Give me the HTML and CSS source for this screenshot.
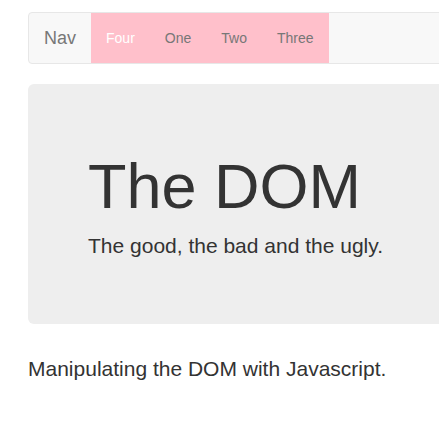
FILE: index.html
```html
<!DOCTYPE html>
<html>
<head>
<meta charset="utf-8">
<link rel="stylesheet" href="styles.css">
</head>
<body>
<div class="container">
  <nav class="navbar">
    <a class="brand">Nav</a>
    <ul class="nav-list">
      <li><a class="active">Four</a></li>
      <li><a>One</a></li>
      <li><a>Two</a></li>
      <li><a>Three</a></li>
    </ul>
  </nav>
  <div class="jumbotron">
    <h1>The DOM</h1>
    <p>The good, the bad and the ugly.</p>
  </div>
  <p class="lead">Manipulating the DOM with Javascript.</p>
</div>
</body>
</html>
```

FILE: styles.css
```css
html, body {
  margin: 0;
  padding: 0;
  overflow: hidden;
  background: #fff;
}
body {
  font-family: "Liberation Sans", Arial, Helvetica, sans-serif;
  font-size: 14px;
  line-height: 1.42857143;
  color: #333;
}
.container {
  width: 1000px;
  padding: 12px 0 0 28px;
}
.navbar {
  display: flex;
  align-items: stretch;
  min-height: 50px;
  background: #f8f8f8;
  border: 1px solid #e7e7e7;
  border-radius: 4px;
  margin-bottom: 20px;
}
.brand {
  padding: 15px;
  font-size: 18px;
  line-height: 20px;
  color: #777;
}
.nav-list {
  display: flex;
  list-style: none;
  margin: 0;
  padding: 0;
  background: pink;
}
.nav-list a {
  display: block;
  padding: 15px;
  line-height: 20px;
  color: #777;
}
.nav-list a.active {
  color: #fff;
}
.jumbotron {
  background: #eee;
  border-radius: 6px;
  padding: 48px 60px;
  margin-bottom: 30px;
}
.jumbotron h1 {
  font-size: 63px;
  font-weight: 500;
  line-height: 1.1;
  margin: 20px 0 10px;
}
.jumbotron p {
  font-size: 21px;
  font-weight: 200;
  margin: 0 0 15px;
}
.lead {
  font-size: 21px;
  margin: 0;
}
```
